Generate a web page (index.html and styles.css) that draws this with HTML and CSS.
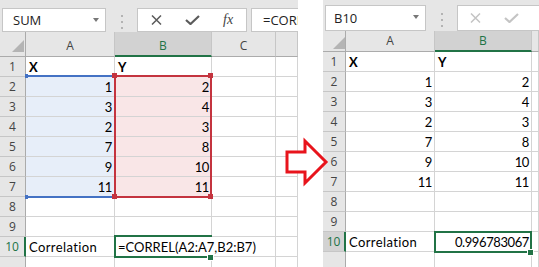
FILE: index.html
```html
<!DOCTYPE html>
<html lang="en">
<head>
  <meta charset="UTF-8">
  <meta name="viewport" content="width=device-width, initial-scale=1.0">
  <title>CORREL in Excel</title>
  <link rel="stylesheet" href="styles.css">
</head>
<body>
  <div class="compare">

    <!-- Before: the formula is being typed into B10 -->
    <div class="sheet sheet-before">
      <div class="toolbar">
        <div class="namebox">SUM<span class="drop"></span></div>
        <div class="grip"><span></span><span></span><span></span></div>
        <div class="buttons">
          <svg class="icon-cross" viewBox="0 0 10 10"><path d="M0.5 0.5 L9.5 9.5 M9.5 0.5 L0.5 9.5"/></svg>
          <svg class="icon-check" viewBox="0 0 15 10"><path d="M1 5 L5.5 9 L14 1"/></svg>
          <span class="fx">fx</span>
        </div>
        <div class="formula"><span class="caret"></span>=CORREL(A2:A7,B2:B7)</div>
      </div>

      <div class="grid">
        <div class="corner"></div><div class="col">A</div><div class="col selected">B</div><div class="col">C</div><div class="col"></div>
        <div class="row">1</div><div class="cell bold">X</div><div class="cell bold">Y</div><div class="cell"></div><div class="cell"></div>
        <div class="row">2</div><div class="cell num ref-a">1</div><div class="cell num ref-b">2</div><div class="cell"></div><div class="cell"></div>
        <div class="row">3</div><div class="cell num ref-a">3</div><div class="cell num ref-b">4</div><div class="cell"></div><div class="cell"></div>
        <div class="row">4</div><div class="cell num ref-a">2</div><div class="cell num ref-b">3</div><div class="cell"></div><div class="cell"></div>
        <div class="row">5</div><div class="cell num ref-a">7</div><div class="cell num ref-b">8</div><div class="cell"></div><div class="cell"></div>
        <div class="row">6</div><div class="cell num ref-a">9</div><div class="cell num ref-b">10</div><div class="cell"></div><div class="cell"></div>
        <div class="row">7</div><div class="cell num ref-a">11</div><div class="cell num ref-b">11</div><div class="cell"></div><div class="cell"></div>
        <div class="row">8</div><div class="cell"></div><div class="cell"></div><div class="cell"></div><div class="cell"></div>
        <div class="row">9</div><div class="cell"></div><div class="cell"></div><div class="cell"></div><div class="cell"></div>
        <div class="row selected-row">10</div><div class="cell text">Correlation</div><div class="cell editing">=CORREL(A2:A7,B2:B7)</div><div class="cell"></div><div class="cell"></div>
        <div class="row"></div><div class="cell"></div><div class="cell"></div><div class="cell"></div><div class="cell"></div>

        <!-- range highlights drawn over the cells -->
        <div class="range range-a"></div>
        <div class="range range-b">
          <span class="knob knob-tl"></span><span class="knob knob-tr"></span>
          <span class="knob knob-bl"></span><span class="knob knob-br"></span>
        </div>
        <div class="active active-edit"><span class="fill-handle"></span></div>
      </div>
    </div>

    <!-- After: the result in B10 -->
    <div class="sheet sheet-after">
      <div class="toolbar">
        <div class="namebox">B10<span class="drop"></span></div>
        <div class="grip"><span></span><span></span><span></span></div>
        <div class="buttons disabled">
          <svg class="icon-cross" viewBox="0 0 10 10"><path d="M0.5 0.5 L9.5 9.5 M9.5 0.5 L0.5 9.5"/></svg>
          <svg class="icon-check" viewBox="0 0 15 10"><path d="M1 5 L5.5 9 L14 1"/></svg>
        </div>
      </div>

      <div class="grid">
        <div class="corner"></div><div class="col">A</div><div class="col selected">B</div><div class="col"></div>
        <div class="row">1</div><div class="cell bold">X</div><div class="cell bold">Y</div><div class="cell"></div>
        <div class="row">2</div><div class="cell num">1</div><div class="cell num">2</div><div class="cell"></div>
        <div class="row">3</div><div class="cell num">3</div><div class="cell num">4</div><div class="cell"></div>
        <div class="row">4</div><div class="cell num">2</div><div class="cell num">3</div><div class="cell"></div>
        <div class="row">5</div><div class="cell num">7</div><div class="cell num">8</div><div class="cell"></div>
        <div class="row">6</div><div class="cell num">9</div><div class="cell num">10</div><div class="cell"></div>
        <div class="row">7</div><div class="cell num">11</div><div class="cell num">11</div><div class="cell"></div>
        <div class="row">8</div><div class="cell"></div><div class="cell"></div><div class="cell"></div>
        <div class="row">9</div><div class="cell"></div><div class="cell"></div><div class="cell"></div>
        <div class="row selected-row">10</div><div class="cell text">Correlation</div><div class="cell num">0.996783067</div><div class="cell"></div>
        <div class="row"></div><div class="cell"></div><div class="cell"></div><div class="cell"></div>

        <div class="active active-done"><span class="fill-handle"></span></div>
      </div>
    </div>

    <!-- arrow between the two sheets -->
    <svg class="arrow" viewBox="0 0 539 267">
      <polygon points="287,152 305,152 305,141 326,162 305,183 305,172 287,172"/>
    </svg>
  </div>
</body>
</html>
```

FILE: styles.css
```css
body {
  margin: 0;
  background-color: #fff;
  font-family: 'Lato', sans-serif;
  color: #000;
}

.compare {
  position: relative;
  display: flex;
  gap: 25px;
  width: 539px;
  height: 267px;
  overflow: hidden;
}

.sheet {
  display: flex;
  flex-direction: column;
  overflow: hidden;
}

.sheet-before {
  width: 298px;
}

.sheet-after {
  width: 216px;
}

/* name box + formula bar */
.toolbar {
  display: flex;
  align-items: flex-start;
  box-sizing: border-box;
  background-color: #e6e6e6;
  padding-left: 2px;
  font-family: 'Open Sans', sans-serif;
  color: #222;
}

.sheet-before .toolbar {
  height: 38px;
  padding-top: 8px;
}

.sheet-after .toolbar {
  height: 40px;
  padding-top: 5px;
}

.namebox {
  display: flex;
  align-items: center;
  justify-content: space-between;
  box-sizing: border-box;
  background-color: #fff;
  border: 1px solid #c6c6c6;
  padding: 0 6px 0 9px;
  font-size: 13px;
}

.sheet-before .namebox {
  width: 104px;
  height: 24px;
  padding-left: 10px;
}

.sheet-after .namebox {
  width: 101px;
  height: 26px;
  padding-left: 8px;
}

.drop {
  width: 0;
  height: 0;
  border-left: 3.5px solid transparent;
  border-right: 3.5px solid transparent;
  border-top: 4px solid #777;
}

.sheet-after .drop {
  margin-top: -3px;
}

.grip {
  display: flex;
  flex-direction: column;
  align-items: center;
  gap: 4px;
  width: 31px;
  padding-top: 7px;
}

.sheet-after .grip {
  padding-top: 8px;
}

.grip span {
  width: 2px;
  height: 2px;
  background-color: #b3b3b3;
}

.buttons {
  display: flex;
  align-items: center;
  box-sizing: border-box;
  background-color: #fff;
  border: 1px solid #c6c6c6;
  padding-left: 13px;
  stroke: #5b5b5b;
  fill: none;
}

.sheet-before .buttons {
  width: 110px;
  height: 24px;
}

.sheet-after .buttons {
  flex: 1;
  height: 26px;
  margin-right: -2px;
  padding-left: 12px;
}

.buttons.disabled {
  stroke: #c4c4c4;
}

.icon-cross {
  width: 11px;
  height: 10px;
  stroke-width: 1.5;
}

.icon-check {
  width: 15px;
  height: 10px;
  margin-left: 23px;
  stroke-width: 2.2;
}

.fx {
  margin-left: 23px;
  font-family: 'Liberation Serif', serif;
  font-style: italic;
  font-size: 14px;
  color: #444;
}

.formula {
  flex: 1;
  display: flex;
  align-items: center;
  box-sizing: border-box;
  height: 24px;
  margin-left: 4px;
  margin-right: -20px;
  padding-left: 10px;
  background-color: #fff;
  border: 1px solid #c6c6c6;
  font-size: 13px;
  white-space: nowrap;
  overflow: hidden;
}

.caret {
  width: 1px;
  height: 18px;
  margin-right: 1px;
  background-color: #000;
}

/* worksheet grid */
.grid {
  position: relative;
  display: grid;
  flex: 1;
  font-size: 13px;
}

.sheet-before .grid {
  grid-template-columns: 26px 89px 97px 64px 1fr;
  grid-template-rows: 25px repeat(11, 20px);
}

.sheet-after .grid {
  grid-template-columns: 23px 89px 97px 1fr;
  grid-template-rows: 21px repeat(11, 20px);
}

.corner,
.col,
.row {
  box-sizing: border-box;
  background-color: #e6e6e6;
  border-right: 1px solid #c6c6c6;
  border-bottom: 1px solid #c6c6c6;
  font-family: 'Open Sans', sans-serif;
  font-size: 12px;
  line-height: 16px;
  color: #444;
  text-align: center;
}

.corner {
  display: flex;
  justify-content: flex-end;
  align-items: flex-end;
  padding: 0 1px 4px 0;
  border-right-color: #ababab;
  border-bottom-color: #ababab;
}

.sheet-after .corner {
  padding: 0 0 2px 0;
}

.corner::after {
  content: "";
  width: 12px;
  height: 12px;
  background-color: #b4b4b4;
  clip-path: polygon(100% 0, 100% 100%, 0 100%);
}

.col {
  padding-top: 6px;
  border-bottom-color: #ababab;
}

.sheet-after .col {
  padding-top: 2px;
}

.row {
  padding-top: 2px;
  border-right-color: #ababab;
}

.col.selected {
  background-color: #d2d2d2;
  border-bottom: 2px solid #217346;
  color: #217346;
}

.row.selected-row {
  border-right: 2px solid #217346;
  color: #217346;
}

.sheet-after .row.selected-row {
  background-color: #d2d2d2;
}

.cell {
  box-sizing: border-box;
  border-right: 1px solid #d4d4d4;
  border-bottom: 1px solid #d4d4d4;
  padding: 2px 2px 0 3px;
  line-height: 16px;
  white-space: nowrap;
}

.cell.num {
  text-align: right;
  letter-spacing: -0.4px;
}

.cell.text {
  letter-spacing: 0.4px;
}

.cell.bold {
  font-weight: bold;
}

.cell.editing {
  border-right: none;
}

.ref-a {
  background-color: #e7eef9;
}

.ref-b {
  background-color: #f9e6e7;
}

/* formula reference outlines and the active cell */
.range {
  position: absolute;
  box-sizing: border-box;
}

.range-a {
  left: 25px;
  top: 43px;
  width: 89px;
  height: 123px;
  border-top: 2px solid #4472c4;
  border-bottom: 2px solid #4472c4;
}

.range-a::before,
.range-a::after {
  content: "";
  position: absolute;
  left: 0;
  width: 3px;
  height: 4px;
  background-color: #4472c4;
}

.range-a::before {
  top: -3px;
}

.range-a::after {
  bottom: -3px;
}

.range-b {
  left: 114px;
  top: 43px;
  width: 98px;
  height: 123px;
  border: 2px solid #c4343f;
}

.knob {
  position: absolute;
  width: 5px;
  height: 5px;
  background-color: #c4343f;
}

.knob-tl { left: -4px; top: -4px; }
.knob-tr { right: -3px; top: -4px; }
.knob-bl { left: -4px; bottom: -3px; }
.knob-br { right: -3px; bottom: -3px; }

.active {
  position: absolute;
  box-sizing: border-box;
  border: 2px solid #217346;
}

.active-edit {
  left: 114px;
  top: 203px;
  width: 98px;
  height: 23px;
  border-right: none;
}

.active-done {
  left: 111px;
  top: 200px;
  width: 98px;
  height: 22px;
}

.fill-handle {
  position: absolute;
  right: -4px;
  bottom: -5px;
  width: 5px;
  height: 5px;
  background-color: #217346;
  border: 1px solid #fff;
}

.active-edit .fill-handle {
  right: -2px;
}

.arrow {
  position: absolute;
  left: 0;
  top: 0;
  width: 539px;
  height: 267px;
  pointer-events: none;
}

.arrow polygon {
  fill: #fff;
  stroke: #e8141c;
  stroke-width: 3;
}
```
